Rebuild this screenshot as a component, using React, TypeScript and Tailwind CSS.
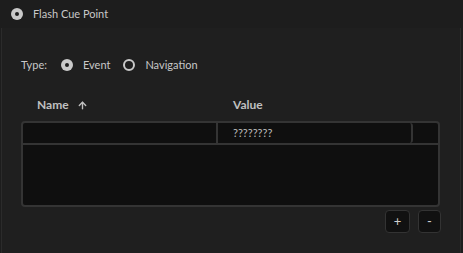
import { ArrowUp } from "lucide-react"

function Radio({ checked }: { checked?: boolean }) {
  return checked ? (
    <span className="flex h-[12px] w-[12px] items-center justify-center rounded-full bg-[#c9c9c9]">
      <span className="h-[4px] w-[4px] rounded-full bg-[#1e1e1e]" />
    </span>
  ) : (
    <span className="h-[12px] w-[12px] rounded-full border-2 border-[#c9c9c9] bg-[#1e1e1e]" />
  )
}

function App() {
  return (
    <div className="flex h-[253px] w-[463px] flex-col bg-[#1d1d1d] text-[11px] text-[#c8c8c8] font-['Lato','Liberation_Sans',sans-serif]">
      {/* Cue point kind */}
      <div className="flex h-[28px] items-center gap-[10px] pl-[11px]">
        <Radio checked />
        <span>Flash Cue Point</span>
      </div>

      <div className="ml-[1px] flex w-[460px] flex-1 flex-col border-x border-[#2b2b2b] bg-[#1f1f1f] pl-[19px] pr-[19px]">
        {/* Type */}
        <div className="mt-[29px] flex h-[16px] items-center">
          <span className="mr-[14px]">Type:</span>
          <Radio checked />
          <span className="ml-[10px] mr-[13px]">Event</span>
          <Radio />
          <span className="ml-[10px]">Navigation</span>
        </div>

        {/* Column headers */}
        <div className="mt-[24px] flex h-[16px] items-center text-[12px] font-bold text-[#c0c0c0]">
          <div className="flex w-[196px] items-center gap-[8px] pl-[16px]">
            Name <ArrowUp size={11} strokeWidth={3} />
          </div>
          <div className="pl-[16px]">Value</div>
        </div>

        {/* Table */}
        <div className="mt-[8px] h-[86px] w-[419px] overflow-hidden rounded-[4px] border-2 border-[#343434] bg-[#0f0f0f]">
          <div className="flex h-[22px] border-b-2 border-[#343434]">
            <div className="w-[195px] border-r-2 border-[#343434]" />
            <div className="flex w-[195px] items-center rounded-r-[3px] border-r-2 border-[#343434] pl-[15px] text-[11px] text-[#bdbdbd]">
              ????????
            </div>
            <div className="flex-1" />
          </div>
        </div>

        {/* Add / remove */}
        <div className="mt-[3px] flex justify-end gap-[8px]">
          <button className="flex h-[23px] w-[25px] items-center justify-center rounded-[4px] border border-[#333] bg-[#111] text-[13px] text-[#d0d0d0]">
            +
          </button>
          <button className="flex h-[23px] w-[23px] items-center justify-center rounded-[4px] border border-[#333] bg-[#111] text-[13px] text-[#d0d0d0]">
            -
          </button>
        </div>
      </div>
    </div>
  )
}

export default App
